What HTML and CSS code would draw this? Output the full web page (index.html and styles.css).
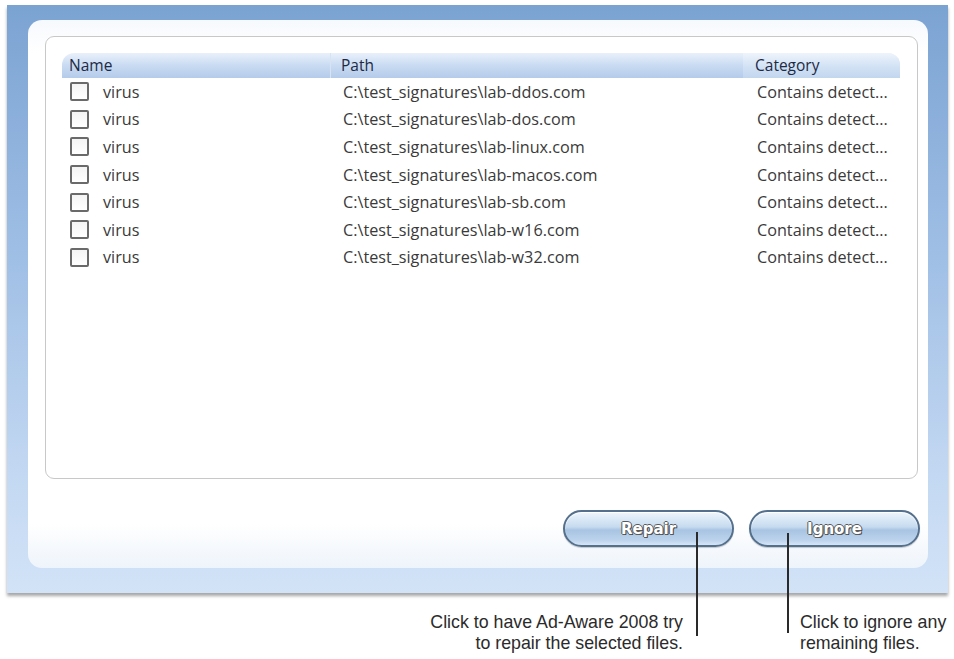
FILE: index.html
```html
<!DOCTYPE html>
<html lang="en">
<head>
    <meta charset="UTF-8">
    <meta name="viewport" content="width=device-width, initial-scale=1.0">
    <title>Ad-Aware 2008 - Scan Results</title>
    <link rel="stylesheet" href="styles.css">
</head>
<body>
    <div class="page">
        <div class="frame">
            <div class="panel">
                <div class="list">
                    <div class="list-head">
                        <div class="col col-name">Name</div>
                        <div class="col col-path">Path</div>
                        <div class="col col-cat">Category</div>
                    </div>
                    <div class="rows">
                        <div class="row">
                            <div class="col col-name"><span class="check"></span>virus</div>
                            <div class="col col-path">C:\test_signatures\lab-ddos.com</div>
                            <div class="col col-cat">Contains detect...</div>
                        </div>
                        <div class="row">
                            <div class="col col-name"><span class="check"></span>virus</div>
                            <div class="col col-path">C:\test_signatures\lab-dos.com</div>
                            <div class="col col-cat">Contains detect...</div>
                        </div>
                        <div class="row">
                            <div class="col col-name"><span class="check"></span>virus</div>
                            <div class="col col-path">C:\test_signatures\lab-linux.com</div>
                            <div class="col col-cat">Contains detect...</div>
                        </div>
                        <div class="row">
                            <div class="col col-name"><span class="check"></span>virus</div>
                            <div class="col col-path">C:\test_signatures\lab-macos.com</div>
                            <div class="col col-cat">Contains detect...</div>
                        </div>
                        <div class="row">
                            <div class="col col-name"><span class="check"></span>virus</div>
                            <div class="col col-path">C:\test_signatures\lab-sb.com</div>
                            <div class="col col-cat">Contains detect...</div>
                        </div>
                        <div class="row">
                            <div class="col col-name"><span class="check"></span>virus</div>
                            <div class="col col-path">C:\test_signatures\lab-w16.com</div>
                            <div class="col col-cat">Contains detect...</div>
                        </div>
                        <div class="row">
                            <div class="col col-name"><span class="check"></span>virus</div>
                            <div class="col col-path">C:\test_signatures\lab-w32.com</div>
                            <div class="col col-cat">Contains detect...</div>
                        </div>
                    </div>
                </div>
                <div class="actions">
                    <button class="pill">Repair</button>
                    <button class="pill">Ignore</button>
                </div>
            </div>
        </div>
        <div class="notes">
            <p class="note note-repair">Click to have Ad-Aware 2008 try<br>to repair the selected files.</p>
            <p class="note note-ignore">Click to ignore any<br>remaining files.</p>
        </div>
        <span class="pointer pointer-repair"></span>
        <span class="pointer pointer-ignore"></span>
    </div>
</body>
</html>
```

FILE: styles.css
```css
body {
    margin: 0;
    padding: 0;
    background: #fff;
    font-family: "Open Sans", "DejaVu Sans", sans-serif;
}
.page {
    position: relative;
    width: 954px;
    height: 659px;
}
.frame {
    margin: 5px 0 0 7px;
    width: 941px;
    height: 588px;
    box-sizing: border-box;
    padding: 15px 20px 25px 21px;
    background: linear-gradient(#7ba3d2, #9dbde4 40%, #c3d8f2 80%, #d2e3f7);
    box-shadow: 0 3px 3px rgba(0, 0, 0, 0.35);
}
.panel {
    height: 100%;
    box-sizing: border-box;
    padding: 16px 8px 0 17px;
    border-radius: 14px;
    background: linear-gradient(#f6f9fd, #fff 6%, #fff 92%, #eef4fb);
}
.list {
    height: 443px;
    margin-right: 2px;
    box-sizing: border-box;
    padding: 16px 17px 0 16px;
    border: 1px solid #c8c8c8;
    border-radius: 9px;
    background: #fff;
}
.list-head {
    display: flex;
    height: 25px;
    border-radius: 12px 12px 0 0;
    background: linear-gradient(#e9f0fb, #c9dbf2 50%, #b4cbea);
    color: #1d2a44;
    font-size: 15.5px;
    line-height: 25px;
}
.list-head .col-name { padding-left: 7px; }
.list-head .col-path {
    padding-left: 10px;
    border-left: 1px solid #d7e3f3;
}
.list-head .col-cat {
    padding-left: 12px;
    background: linear-gradient(#eef4fc, #d4e3f5 50%, #c2d6ef);
    border-radius: 0 12px 0 0;
}
.col {
    box-sizing: border-box;
    white-space: nowrap;
    overflow: hidden;
}
.col-name { width: 268px; }
.col-path { width: 413px; }
.col-cat { flex: 1; }
.row {
    display: flex;
    align-items: center;
    height: 27.6px;
    color: #3a3a3a;
    font-size: 16.2px;
}
.row .col-name {
    display: flex;
    align-items: center;
    padding-left: 8px;
}
.row .col-path { padding-left: 13px; }
.row .col-cat { padding-left: 14px; }
.check {
    width: 15px;
    height: 15px;
    margin-right: 14px;
    border: 2px solid #6a6a6a;
    border-radius: 2px;
    background: linear-gradient(#f4f4f4, #fff);
}
.actions {
    display: flex;
    justify-content: flex-end;
    gap: 15px;
    margin-top: 31px;
}
.pill {
    width: 171px;
    height: 37px;
    border: 2px solid #54708c;
    border-radius: 19px;
    background: linear-gradient(#eef5fc, #c6dbef 45%, #a8c4e2 55%, #bcd3ec 85%, #d5e5f5);
    box-shadow: inset 0 1px 1px #fff, 0 1px 1px rgba(0, 0, 0, 0.2);
    color: #fff;
    font-family: "DejaVu Sans", sans-serif;
    font-size: 15px;
    font-weight: bold;
    text-shadow: -1px 0 #5a5a5a, 1px 0 #5a5a5a, 0 -1px #5a5a5a, 0 1px #5a5a5a, 1px 1px #444;
    cursor: pointer;
}
.notes {
    display: grid;
    grid-template-columns: 683px 1fr;
    column-gap: 117px;
    margin-top: 19px;
}
.note {
    margin: 0;
    color: #2b2b2b;
    font-family: "Liberation Sans", Arial, sans-serif;
    font-size: 17.8px;
    line-height: 21px;
}
.note-repair { text-align: right; }
.pointer {
    position: absolute;
    width: 2px;
    background: #2a2a2a;
}
.pointer-repair {
    left: 696px;
    top: 527px;
    height: 104px;
}
.pointer-ignore {
    left: 787px;
    top: 528px;
    height: 100px;
}
```
